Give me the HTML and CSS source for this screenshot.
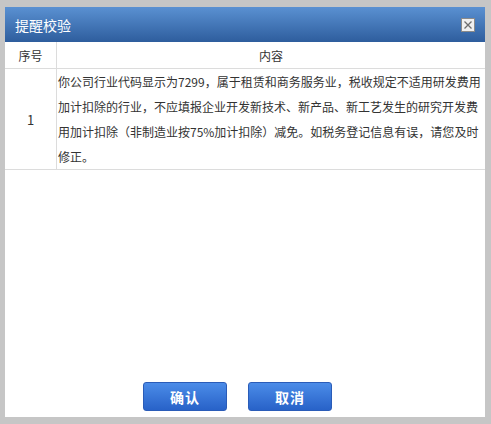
FILE: index.html
```html
<!DOCTYPE html>
<html lang="zh-CN">
<head>
  <meta charset="UTF-8">
  <title>提醒校验</title>
  <link rel="stylesheet" href="styles.css">
</head>
<body>
  <div class="dialog">
    <div class="dialog-head">
      <span class="dialog-title">提醒校验</span>
      <span class="dialog-close">
        <svg width="8" height="8" viewBox="0 0 8 8"><path d="M0.5 0.5L7.5 7.5M7.5 0.5L0.5 7.5" stroke="#6e6e6e" stroke-width="1.3"/></svg>
      </span>
    </div>

    <table class="check-table">
      <thead>
        <tr>
          <th class="col-no">序号</th>
          <th>内容</th>
        </tr>
      </thead>
      <tbody>
        <tr>
          <td class="col-no num">1</td>
          <td class="col-text">你公司行业代码显示为7299，属于租赁和商务服务业，税收规定不适用研发费用加计扣除的行业，不应填报企业开发新技术、新产品、新工艺发生的研究开发费用加计扣除（非制造业按75%加计扣除）减免。如税务登记信息有误，请您及时修正。</td>
        </tr>
      </tbody>
    </table>

    <div class="dialog-foot">
      <button class="btn">确认</button>
      <button class="btn">取消</button>
    </div>
  </div>
</body>
</html>
```

FILE: styles.css
```css
body {
  margin: 0;
  padding: 7px 6px 6px 5px;
  background: #c6c6c6;
  font-family: "Noto Sans CJK SC", "Noto Sans", sans-serif;
  height: 424px;
  box-sizing: border-box;
  overflow: hidden;
}

.dialog {
  width: 480px;
  height: 410px;
  background: #fff;
  display: flex;
  flex-direction: column;
}

/* ===== header ===== */
.dialog-head {
  height: 35px;
  background: linear-gradient(#5a91d2, #2e5d9d);
  display: flex;
  align-items: center;
  justify-content: space-between;
  padding: 0 10px 0 10px;
}

.dialog-title {
  color: #fff;
  font-size: 14px;
}

.dialog-close {
  width: 12px;
  height: 12px;
  border: 1px solid #8a8a8a;
  background: #f0f0f0;
  display: flex;
  align-items: center;
  justify-content: center;
}

/* ===== table ===== */
.check-table {
  width: 100%;
  border-collapse: collapse;
  font-size: 12px;
  color: #333;
}

.check-table th,
.check-table td {
  border: 1px solid #dcdcdc;
  font-weight: normal;
  padding: 0;
}

.check-table tr > :first-child {
  border-left: none;
}

.check-table tr > :last-child {
  border-right: none;
}

.check-table thead th {
  border-top: none;
  height: 26px;
}

.col-no {
  width: 51px;
  text-align: center;
}

.num {
  font-size: 13px;
}

.check-table .col-text {
  line-height: 25px;
  padding: 0 0 0 1px;
}

/* ===== footer ===== */
.dialog-foot {
  margin-top: auto;
  display: flex;
  gap: 21px;
  padding: 0 0 6px 138px;
}

.btn {
  width: 84px;
  height: 29px;
  border: 1px solid #2a5cb8;
  border-radius: 3px;
  background: linear-gradient(#4b8ce8, #2862c8);
  color: #fff;
  font-family: inherit;
  font-size: 14px;
  font-weight: bold;
  letter-spacing: 1px;
}
```
